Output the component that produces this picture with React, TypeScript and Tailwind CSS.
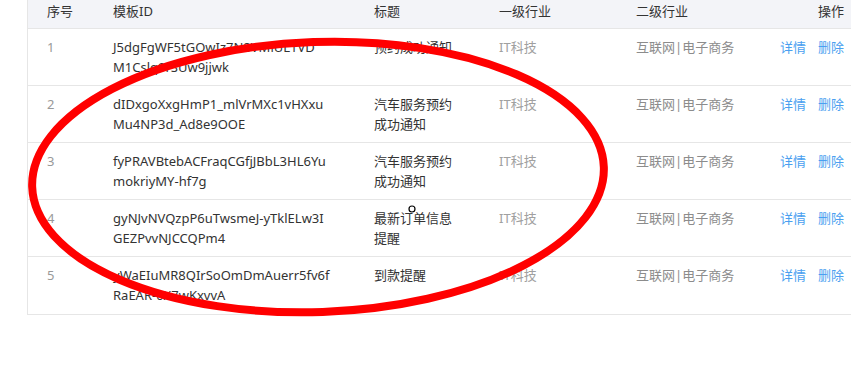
import React from 'react';

type Row = {
  no: number;
  id: [string, string];
  title: string[];
};

const rows: Row[] = [
  { no: 1, id: ['J5dgFgWF5tGOwIz7N8VMiUL1VD', 'M1Cslq9rSUw9jjwk'], title: ['预约成功通知'] },
  { no: 2, id: ['dIDxgoXxgHmP1_mlVrMXc1vHXxu', 'Mu4NP3d_Ad8e9OOE'], title: ['汽车服务预约', '成功通知'] },
  { no: 3, id: ['fyPRAVBtebACFraqCGfjJBbL3HL6Yu', 'mokriyMY-hf7g'], title: ['汽车服务预约', '成功通知'] },
  { no: 4, id: ['gyNJvNVQzpP6uTwsmeJ-yTklELw3I', 'GEZPvvNJCCQPm4'], title: ['最新订单信息', '提醒'] },
  { no: 5, id: ['yWaEIuMR8QIrSoOmDmAuerr5fv6f', 'RaEAR-0X7wKxvvA'], title: ['到款提醒'] },
];

const cols = 'grid grid-cols-[85px_261px_125px_137px_1fr_auto]';

const App: React.FC = () => {
  return (
    <div
      className="relative w-[851px] h-[374px] bg-white overflow-hidden text-[13px]"
      style={{ fontFamily: '"Noto Sans", "Noto Sans CJK SC", sans-serif' }}
    >
      <div className="pl-[27px]">
        <div className="border-l border-b border-[#e6e6e6]">
          {/* header */}
          <div className={`${cols} h-[29px] bg-[#f3f4f8] border-b border-[#e6e6e6] text-[#333] leading-[20px] pt-[1px]`}>
            <div className="pl-[19px]">序号</div>
            <div>模板ID</div>
            <div>标题</div>
            <div>一级行业</div>
            <div>二级行业</div>
            <div className="pr-[7px]">操作</div>
          </div>

          {rows.map((r, i) => (
            <div
              key={r.no}
              className={`${cols} h-[57px] pt-[8px] leading-[20px] ${i < rows.length - 1 ? 'border-b border-[#e6e6e6]' : ''}`}
            >
              <div className="pl-[19px] text-[#999]">{r.no}</div>
              <div className="text-[#333]">
                <div>{r.id[0]}</div>
                <div>{r.id[1]}</div>
              </div>
              <div className="text-[#333]">
                {r.title.map((t) => (
                  <div key={t}>{t}</div>
                ))}
              </div>
              <div className="text-[#a0a0a0]">IT科技</div>
              <div className="text-[#8c8c8c]">互联网|电子商务</div>
              <div className="flex gap-[12px] pr-[7px] text-[#4a9ff0]">
                <span>详情</span>
                <span>删除</span>
              </div>
            </div>
          ))}
        </div>
      </div>

      {/* hand-drawn annotation */}
      <svg className="absolute left-0 top-0 pointer-events-none" width="851" height="374">
        <ellipse
          cx="318"
          cy="177"
          rx="286"
          ry="135"
          transform="rotate(-2 318 177)"
          fill="none"
          stroke="#ff0000"
          strokeWidth="8"
        />
        <circle cx="412" cy="209" r="3" fill="none" stroke="#000" strokeWidth="1.2" />
      </svg>
    </div>
  );
};

export default App;
